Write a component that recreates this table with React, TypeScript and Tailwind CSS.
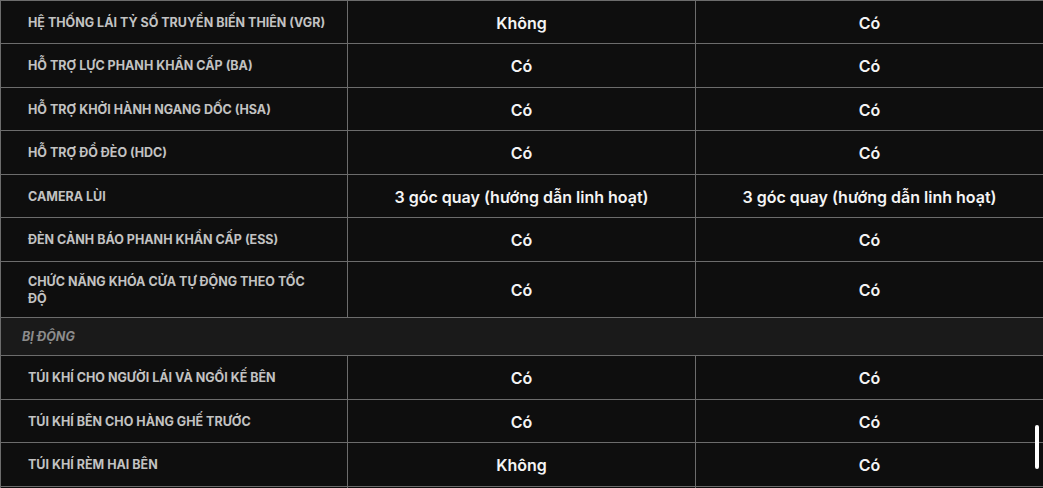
import { Fragment } from 'react';

type Spec = { label: string; a: string; b: string; h: string };

const rows: Spec[] = [
  { label: 'Hệ thống lái tỷ số truyền biến thiên (VGR)', a: 'Không', b: 'Có', h: 'h-[43px]' },
  { label: 'Hỗ trợ lực phanh khẩn cấp (BA)', a: 'Có', b: 'Có', h: 'h-[44px]' },
  { label: 'Hỗ trợ khởi hành ngang dốc (HSA)', a: 'Có', b: 'Có', h: 'h-[43px]' },
  { label: 'Hỗ trợ đổ đèo (HDC)', a: 'Có', b: 'Có', h: 'h-[44px]' },
  { label: 'Camera lùi', a: '3 góc quay (hướng dẫn linh hoạt)', b: '3 góc quay (hướng dẫn linh hoạt)', h: 'h-[43px]' },
  { label: 'Đèn cảnh báo phanh khẩn cấp (ESS)', a: 'Có', b: 'Có', h: 'h-[44px]' },
  // line break as in the original layout
  { label: 'Chức năng khóa cửa tự động theo tốc\nđộ', a: 'Có', b: 'Có', h: 'h-[56px]' },
];

const passive: Spec[] = [
  { label: 'Túi khí cho người lái và ngồi kế bên', a: 'Có', b: 'Có', h: 'h-[44px]' },
  { label: 'Túi khí bên cho hàng ghế trước', a: 'Có', b: 'Có', h: 'h-[43px]' },
  { label: 'Túi khí rèm hai bên', a: 'Không', b: 'Có', h: 'h-[44px]' },
];

function Row({ label, a, b, h }: Spec) {
  return (
    <div className={`flex ${h} border-b border-[#6c6c6c]`}>
      <div className="flex w-[347px] shrink-0 items-center border-r border-[#6c6c6c] pr-[20px] pl-[27px]">
        <p className="text-[12.5px] leading-[17px] font-bold whitespace-pre-line text-[#c2c2c2] uppercase">
          {label}
        </p>
      </div>
      <div className="flex w-[348px] shrink-0 items-center justify-center border-r border-[#6c6c6c] pt-[1px]">
        <p className="text-[16px] font-semibold text-[#f4f4f4]">{a}</p>
      </div>
      <div className="flex w-[348px] shrink-0 items-center justify-center border-r border-[#6c6c6c] pt-[1px]">
        <p className="text-[16px] font-semibold text-[#f4f4f4]">{b}</p>
      </div>
    </div>
  );
}

export default function App() {
  return (
    <div className="relative h-[488px] w-[1043px] overflow-hidden bg-[#0e0e0e] font-['Inter',sans-serif]">
      <div className="w-[1044px] border-t border-l border-[#6c6c6c]">
        {rows.map((r) => (
          <Fragment key={r.label}>
            <Row {...r} />
          </Fragment>
        ))}
        <div className="flex h-[38px] items-center border-b border-[#6c6c6c] bg-[#1a1a1a] pt-[2px] pl-[21px]">
          <p className="text-[12.5px] font-bold text-[#8c8c8c] uppercase italic">Bị động</p>
        </div>
        {passive.map((r) => (
          <Fragment key={r.label}>
            <Row {...r} />
          </Fragment>
        ))}
        {/* next row, only its borders show */}
        <div className="flex h-[44px]">
          <div className="w-[347px] shrink-0 border-r border-[#6c6c6c]" />
          <div className="w-[348px] shrink-0 border-r border-[#6c6c6c]" />
        </div>
      </div>
      {/* overlay scrollbar thumb */}
      <div className="absolute top-[425px] left-[1035px] h-[44px] w-[4px] rounded-full bg-white" />
    </div>
  );
}
